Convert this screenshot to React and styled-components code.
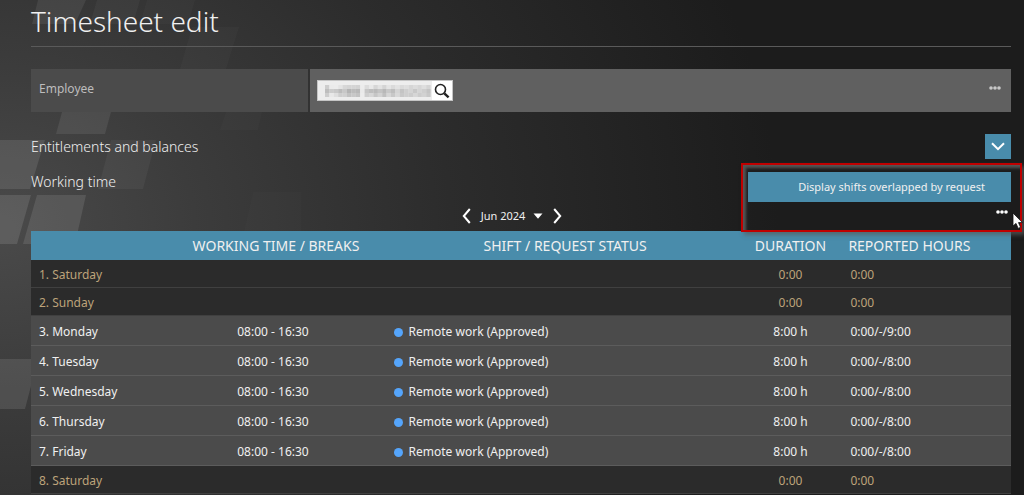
import React, { useState } from 'react';
import styled, { createGlobalStyle } from 'styled-components';

const days = [
  { day: '1. Saturday', weekend: true, duration: '0:00', reported: '0:00' },
  { day: '2. Sunday', weekend: true, duration: '0:00', reported: '0:00' },
  { day: '3. Monday', time: '08:00 - 16:30', status: 'Remote work (Approved)', duration: '8:00 h', reported: '0:00/-/9:00' },
  { day: '4. Tuesday', time: '08:00 - 16:30', status: 'Remote work (Approved)', duration: '8:00 h', reported: '0:00/-/8:00' },
  { day: '5. Wednesday', time: '08:00 - 16:30', status: 'Remote work (Approved)', duration: '8:00 h', reported: '0:00/-/8:00' },
  { day: '6. Thursday', time: '08:00 - 16:30', status: 'Remote work (Approved)', duration: '8:00 h', reported: '0:00/-/8:00' },
  { day: '7. Friday', time: '08:00 - 16:30', status: 'Remote work (Approved)', duration: '8:00 h', reported: '0:00/-/8:00' },
  { day: '8. Saturday', weekend: true, duration: '0:00', reported: '0:00' },
];

// grey levels of the masked name, one row of blocks per line
const mask = [
  [205, 235, 236, 228, 215, 212, 212, 210, 236, 220, 232, 214, 226, 212, 228, 218, 226, 218, 222, 214, 220, 214, 222, 212],
  [190, 204, 200, 188, 200, 180, 188, 184, 234, 198, 190, 186, 196, 184, 200, 190, 212, 196, 206, 212, 200, 212, 206, 196],
  [205, 232, 222, 206, 208, 194, 200, 194, 236, 206, 214, 198, 210, 192, 214, 200, 216, 200, 206, 204, 214, 204, 210, 200],
];

const Dots = () => (
  <svg width="12" height="4" viewBox="0 0 12 4" fill="currentColor" aria-hidden="true">
    <circle cx="2" cy="2" r="1.8" />
    <circle cx="6" cy="2" r="1.8" />
    <circle cx="10" cy="2" r="1.8" />
  </svg>
);

const App = () => {
  const [name, setName] = useState('');

  return (
    <Page>
      <GlobalStyle />
      <Backdrop viewBox="0 0 1024 495" preserveAspectRatio="xMinYMin slice" aria-hidden="true">
        <g fill="#fff">
          <path d="M38 0H86L75 24H32Z" opacity=".07" />
          <path d="M97 0H140L133 24H90Z" opacity=".04" />
          <path d="M147 0H195L188 24H140Z" opacity=".025" />
          <path d="M192 27H239L226 69H180Z" opacity=".025" />
          <path d="M62 112H111L105 134H56Z" opacity=".08" />
          <path d="M226 112H262L258 130H220Z" opacity=".015" />
          <path d="M0 140H45L30 189H0Z" opacity=".1" />
          <path d="M111 140H156L143 189H98Z" opacity=".045" />
          <path d="M0 195H31L17 244H0Z" opacity=".11" />
          <path d="M37 195H86L75 244H23Z" opacity=".1" />
          <path d="M253 192H301V231H244Z" opacity=".012" />
          <path d="M0 359H31V386L25 409H0Z" opacity=".1" />
        </g>
      </Backdrop>
      <Content>
        <Title>Timesheet edit</Title>

        <EmployeeRow>
          <EmployeeLabel htmlFor="employee">Employee</EmployeeLabel>
          <EmployeeField>
            <SearchBox>
              <SearchInput id="employee" value={name} onChange={(e) => setName(e.target.value)} />
              <Mask viewBox="0 0 106 12" preserveAspectRatio="none" aria-hidden="true">
                {mask.map((row, y) =>
                  row.map((v, x) => (
                    <rect key={`${x}-${y}`} x={x * 4.4} y={y * 4} width="4.5" height="4" fill={`rgb(${v},${v},${v})`} />
                  ))
                )}
              </Mask>
              <SearchButton aria-label="Search employee">
                <svg width="16" height="16" viewBox="0 0 16 16" fill="none" stroke="#222" aria-hidden="true">
                  <circle cx="6.5" cy="6.5" r="5" strokeWidth="1.6" />
                  <path d="M10.3 10.3L14.6 14.4" strokeWidth="2.4" />
                </svg>
              </SearchButton>
            </SearchBox>
            <MoreButton aria-label="Employee options" $muted>
              <Dots />
            </MoreButton>
          </EmployeeField>
        </EmployeeRow>

        <SectionRow>
          <SectionTitle>Entitlements and balances</SectionTitle>
          <ExpandButton aria-label="Expand entitlements and balances">
            <svg width="14" height="9" viewBox="0 0 14 9" fill="none" stroke="#fff" strokeWidth="2" aria-hidden="true">
              <path d="M1 1.2L7 7.2L13 1.2" />
            </svg>
          </ExpandButton>
        </SectionRow>

        <WorkingTime>
          <SectionTitle>Working time</SectionTitle>
          <MonthNav>
            <NavButton aria-label="Previous month">
              <svg width="9" height="16" viewBox="0 0 9 16" fill="none" stroke="#fff" strokeWidth="2" aria-hidden="true">
                <path d="M7.8 1L1.8 8L7.8 15" />
              </svg>
            </NavButton>
            <MonthButton>
              Jun 2024
              <svg width="10" height="6" viewBox="0 0 10 6" fill="#fff" aria-hidden="true">
                <path d="M.5 .5H9.5L5 5.8Z" />
              </svg>
            </MonthButton>
            <NavButton aria-label="Next month">
              <svg width="9" height="16" viewBox="0 0 9 16" fill="none" stroke="#fff" strokeWidth="2" aria-hidden="true">
                <path d="M1.2 1L7.2 8L1.2 15" />
              </svg>
            </NavButton>
          </MonthNav>
          <Actions>
            <DisplayButton>Display shifts overlapped by request</DisplayButton>
            <MoreButton aria-label="Working time options">
              <Dots />
            </MoreButton>
            <Highlight />
            <Cursor width="12" height="18" viewBox="0 0 12 18" aria-hidden="true">
              <path d="M1 1V14L4 11.4L6.2 16.4L8.6 15.3L6.5 10.6H10.5Z" fill="#fff" stroke="#111" strokeWidth=".8" />
            </Cursor>
          </Actions>
        </WorkingTime>

        <Table>
          <colgroup>
            <Col $width={13} />
            <Col $width={24} />
            <Col $width={35} />
            <Col $width={11} />
            <Col $width={17} />
          </colgroup>
          <thead>
            <tr>
              <HeadCell aria-label="Day" />
              <HeadCell>WORKING TIME / BREAKS</HeadCell>
              <HeadCell>SHIFT / REQUEST STATUS</HeadCell>
              <HeadCell>DURATION</HeadCell>
              <HeadCell $left>REPORTED HOURS</HeadCell>
            </tr>
          </thead>
          <tbody>
            {days.map((d) => (
              <DayRow key={d.day} $weekend={d.weekend}>
                <DayCell>{d.day}</DayCell>
                <TimeCell>{d.time}</TimeCell>
                <Cell>
                  {d.status && (
                    <Status>
                      <StatusDot />
                      {d.status}
                    </Status>
                  )}
                </Cell>
                <DurationCell>{d.duration}</DurationCell>
                <ReportedCell>{d.reported}</ReportedCell>
              </DayRow>
            ))}
          </tbody>
        </Table>
      </Content>
    </Page>
  );
};

const GlobalStyle = createGlobalStyle`
  * {
    box-sizing: border-box;
  }

  body {
    margin: 0;
    background-color: #1c1c1c;
    overflow: hidden;
  }

  button,
  input {
    font: inherit;
    color: inherit;
    border: none;
    padding: 0;
    background: none;
  }

  button {
    cursor: pointer;
  }
`;

const Page = styled.div`
  position: relative;
  min-height: 100vh;
  overflow: hidden;
  color: #f0f0f0;
  font-family: 'Noto Sans', 'Open Sans', sans-serif;
  font-size: 12px;
  line-height: 16px;
  background: radial-gradient(ellipse 76% 130% at 0% 46%, #4a4a4a 0%, #3c3c3c 25%, #2c2c2c 58%, #1c1c1c 100%);
`;

const Backdrop = styled.svg`
  position: absolute;
  top: 0;
  left: 0;
  width: 100%;
  height: 100%;
`;

const Content = styled.main`
  position: relative;
  padding: 0 13px 0 31px;
`;

const Title = styled.h1`
  height: 47px;
  margin: 0 0 22px;
  border-bottom: 1px solid #5a5a5a;
  font-size: 28px;
  font-weight: 300;
  line-height: 42px;
`;

const EmployeeRow = styled.div`
  display: flex;
  gap: 2px;
  height: 43px;
`;

const EmployeeLabel = styled.label`
  width: 277px;
  padding: 12px 8px;
  background-color: #4b4b4b;
  color: #bdbdbd;
`;

const EmployeeField = styled.div`
  display: flex;
  flex: 1;
  justify-content: space-between;
  padding: 11px 10px 11px 7px;
  background-color: #606060;
`;

const SearchBox = styled.div`
  position: relative;
  display: flex;
  width: 136px;
  height: 21px;
  border: 1px solid #c4c4c4;
  background-color: #fff;
`;

const SearchInput = styled.input`
  width: 114px;
  padding: 0 6px;
  background-color: #ededed;
  color: #333;
`;

const Mask = styled.svg`
  position: absolute;
  top: 4px;
  left: 7px;
  width: 106px;
  height: 12px;
  pointer-events: none;
`;

const SearchButton = styled.button`
  display: flex;
  flex: 1;
  align-items: center;
  justify-content: center;
`;

const MoreButton = styled.button`
  display: flex;
  align-self: ${(props) => (props.$muted ? 'flex-start' : 'flex-end')};
  align-items: center;
  height: 16px;
  color: ${(props) => (props.$muted ? '#c8c8c8' : '#fff')};
`;

const SectionRow = styled.div`
  display: flex;
  justify-content: space-between;
  align-items: center;
  margin-top: 22px;
  height: 25px;
`;

const SectionTitle = styled.h2`
  margin: 0;
  font-size: 14px;
  font-weight: 300;
  line-height: 20px;
`;

const ExpandButton = styled.button`
  display: flex;
  align-items: center;
  justify-content: center;
  width: 26px;
  height: 25px;
  background-color: #498cab;
`;

const WorkingTime = styled.section`
  display: grid;
  grid-template-columns: 1fr auto 1fr;
  height: 59px;
  margin-top: 13px;
`;

const MonthNav = styled.div`
  display: flex;
  align-self: end;
  align-items: center;
  gap: 10px;
  height: 30px;
  padding-right: 18px;
`;

const NavButton = styled.button`
  display: flex;
`;

const MonthButton = styled.button`
  display: flex;
  align-items: center;
  gap: 8px;
  font-size: 11px;
`;

const Actions = styled.div`
  position: relative;
  display: flex;
  flex-direction: column;
  gap: 2px;
  justify-self: end;
  width: 263px;

  ${MoreButton} {
    margin-right: 3px;
  }
`;

const DisplayButton = styled.button`
  height: 30px;
  padding-right: 26px;
  background-color: #498cab;
  font-size: 11px;
  text-align: right;
`;

const Highlight = styled.div`
  position: absolute;
  top: -9px;
  left: -7px;
  right: -11px;
  height: 69px;
  border: 2px solid #c00000;
  box-shadow: 3px 3px 4px rgba(90, 90, 90, 0.7), inset 3px 3px 3px #555;
  pointer-events: none;
  z-index: 1;
`;

const Cursor = styled.svg`
  position: absolute;
  top: 40px;
  right: -13px;
  z-index: 2;
`;

const Table = styled.table`
  width: 100%;
  border-collapse: collapse;
  table-layout: fixed;
`;

const Col = styled.col`
  width: ${(props) => props.$width}%;
`;

const HeadCell = styled.th`
  height: 29px;
  padding: 0 0 0 ${(props) => (props.$left ? '4px' : '0')};
  background-color: #498cab;
  font-size: 14px;
  font-weight: 400;
  text-align: ${(props) => (props.$left ? 'left' : 'center')};
  white-space: nowrap;
`;

const DayRow = styled.tr`
  height: ${(props) => (props.$weekend ? '28px' : '30px')};
  background-color: ${(props) => (props.$weekend ? '#2b2b2b' : '#4b4b4b')};
  color: ${(props) => (props.$weekend ? '#bda37a' : '#f0f0f0')};
  box-shadow: inset 0 -1px 0 ${(props) => (props.$weekend ? '#404040' : '#5c5c5c')};
`;

const Cell = styled.td`
  padding: 2px 0 0;
  white-space: nowrap;
`;

const DayCell = styled(Cell)`
  padding-left: 8px;
`;

const TimeCell = styled(Cell)`
  padding-right: 6px;
  text-align: center;
`;

const DurationCell = styled(Cell)`
  text-align: center;
`;

const ReportedCell = styled(Cell)`
  padding-left: 6px;
`;

const Status = styled.div`
  display: flex;
  align-items: center;
  gap: 6px;
`;

const StatusDot = styled.span`
  width: 9px;
  height: 9px;
  border-radius: 50%;
  background-color: #55a5fb;
`;

export default App;
